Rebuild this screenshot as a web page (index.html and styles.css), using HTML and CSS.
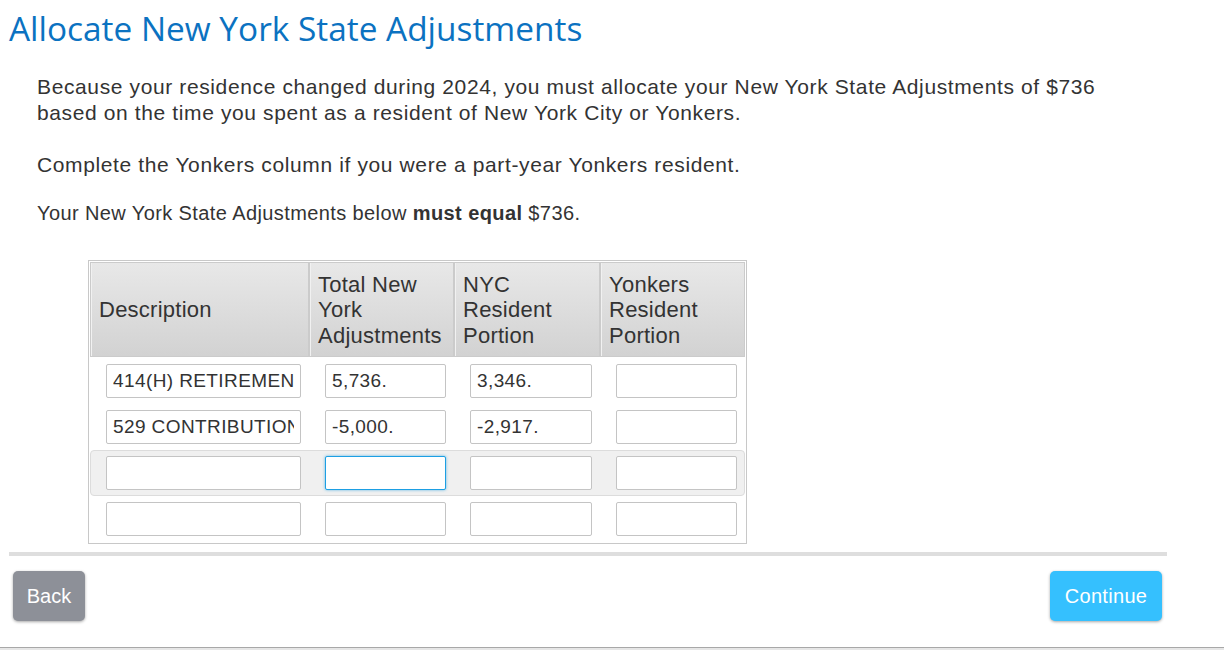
FILE: index.html
```html
<!DOCTYPE html>
<html lang="en">
<head>
<meta charset="utf-8">
<title>Allocate New York State Adjustments</title>
<link rel="stylesheet" href="styles.css">
</head>
<body>
<div class="page">
  <h1 class="title">Allocate New York State Adjustments</h1>
  <div class="content">
    <p class="lead">Because your residence changed during 2024, you must allocate your New York State Adjustments of $736 based on the time you spent as a resident of New York City or Yonkers.</p>
    <p class="lead">Complete the Yonkers column if you were a part-year Yonkers resident.</p>
    <p class="note">Your New York State Adjustments below <strong>must equal</strong> $736.</p>
  </div>
  <div class="grid-table">
    <div class="head">
      <div class="th th-mid">Description</div>
      <div class="th">Total New York Adjustments</div>
      <div class="th">NYC Resident Portion</div>
      <div class="th">Yonkers Resident Portion</div>
    </div>
    <div class="row">
      <div class="td"><input class="field" type="text" value="414(H) RETIREMENT PLAN"></div>
      <div class="td"><input class="field" type="text" value="5,736."></div>
      <div class="td"><input class="field" type="text" value="3,346."></div>
      <div class="td"><input class="field" type="text" value=""></div>
    </div>
    <div class="row">
      <div class="td"><input class="field" type="text" value="529 CONTRIBUTION"></div>
      <div class="td"><input class="field" type="text" value="-5,000."></div>
      <div class="td"><input class="field" type="text" value="-2,917."></div>
      <div class="td"><input class="field" type="text" value=""></div>
    </div>
    <div class="row row-hover">
      <div class="td"><input class="field" type="text" value=""></div>
      <div class="td"><input class="field field-focus" type="text" value=""></div>
      <div class="td"><input class="field" type="text" value=""></div>
      <div class="td"><input class="field" type="text" value=""></div>
    </div>
    <div class="row">
      <div class="td"><input class="field" type="text" value=""></div>
      <div class="td"><input class="field" type="text" value=""></div>
      <div class="td"><input class="field" type="text" value=""></div>
      <div class="td"><input class="field" type="text" value=""></div>
    </div>
  </div>
  <div class="separator"></div>
  <div class="actions">
    <button class="btn btn-back" type="button">Back</button>
    <button class="btn btn-continue" type="button">Continue</button>
  </div>
</div>
<div class="footer-line"></div>
</body>
</html>
```
FILE: styles.css
```css
html, body {
  margin: 0;
  padding: 0;
  background: #ffffff;
}

body {
  font-family: "Liberation Sans", Arial, sans-serif;
  color: #333333;
  width: 1224px;
  height: 651px;
  overflow: hidden;
  position: relative;
}

.page {
  width: 1158px;
  padding-left: 9px;
}

.title {
  margin: 0;
  padding: 7px 0 0 0;
  font-family: "Open Sans", "Noto Sans", sans-serif;
  font-weight: 400;
  font-size: 33.4px;
  line-height: 42px;
  color: #0b72c1;
}

.content {
  width: 1100px;
  padding-left: 28px;
  padding-top: 25px;
}

.lead {
  margin: 0 0 26px 0;
  font-size: 21px;
  line-height: 26px;
  letter-spacing: 0.62px;
  color: #333333;
}

.note {
  margin: -2px 0 0 0;
  font-size: 20px;
  line-height: 22px;
  letter-spacing: 0.4px;
  color: #333333;
}

.note strong {
  font-weight: 700;
}

.grid-table {
  margin-top: 36px;
  margin-left: 79px;
  width: 655px;
  border: 1px solid #c8c8c8;
  padding: 1px;
}

.head {
  display: grid;
  grid-template-columns: 219px 145px 146px 145px;
}

.row {
  display: grid;
  grid-template-columns: 219px 145px 146px 145px;
  border: 1px solid transparent;
  border-radius: 4px;
  padding: 4px 0;
}

.head + .row {
  margin-top: 1px;
}

.th {
  box-sizing: border-box;
  background: linear-gradient(#e8e8e8, #d2d2d2);
  border: 1px solid #cbcbcb;
  box-shadow: inset 1px 0 0 #f1f1f1;
  padding: 9px 4px 8px 8px;
  font-size: 22px;
  line-height: 25.5px;
  letter-spacing: 0.25px;
  color: #333333;
  height: 95px;
  display: flex;
  align-items: center;
}

.td {
  box-sizing: border-box;
  padding: 1px 9px 1px 15px;
}

.row-hover {
  background: #f0f0f0;
  border-color: #dcdcdc;
}

.field {
  box-sizing: border-box;
  width: 100%;
  height: 34px;
  margin: 0;
  display: block;
  border: 1px solid #c4c4c4;
  border-radius: 2px;
  background: #ffffff;
  padding: 0 6px;
  font-family: "Liberation Sans", Arial, sans-serif;
  font-size: 19px;
  letter-spacing: 0.4px;
  color: #333333;
  outline: none;
}

.field-focus {
  border-color: #1d9fe3;
  box-shadow: 0 0 3px rgba(29, 159, 227, 0.7);
}

.separator {
  height: 4px;
  background: #dedede;
  margin-top: 8px;
  width: 1158px;
}

.actions {
  display: flex;
  justify-content: space-between;
  padding: 15px 5px 0 4px;
}

.btn {
  height: 50px;
  border: none;
  border-radius: 5px;
  color: #ffffff;
  font-family: "Liberation Sans", Arial, sans-serif;
  font-size: 20px;
  padding: 0 10px;
  box-shadow: 0 1px 3px rgba(0, 0, 0, 0.35);
  cursor: pointer;
}

.btn-back {
  background: #8d9098;
  width: 72px;
}

.btn-continue {
  background: #35c0fe;
  width: 112px;
  letter-spacing: 0.3px;
}

.footer-line {
  position: absolute;
  left: 0;
  right: 0;
  top: 647px;
  height: 1px;
  background: #a8a8a8;
  border-bottom: 2px solid #e6e6e6;
}
```
